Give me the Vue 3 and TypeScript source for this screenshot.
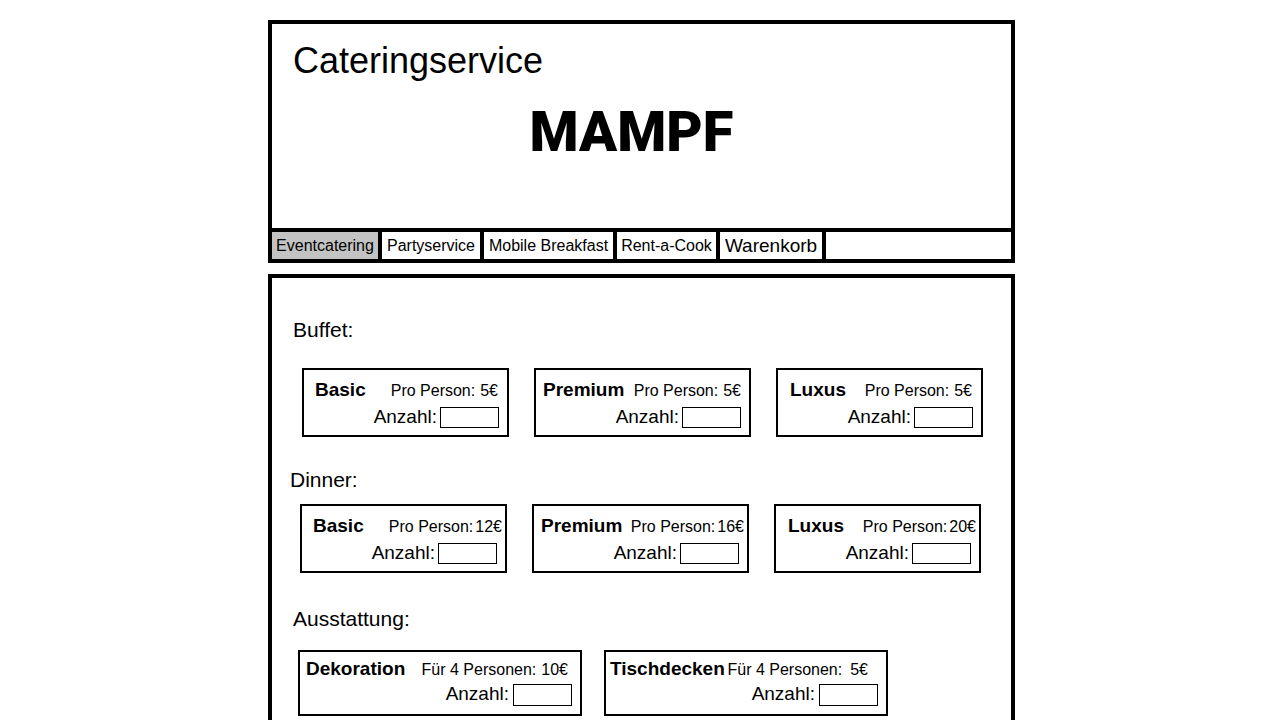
<script setup lang="ts">
import { ref } from 'vue'

interface Offer {
  id: string
  name: string
  unit: string
  price: string
}

interface Section {
  id: string
  title: string
  offers: Offer[]
}

interface NavItem {
  id: string
  label: string
}

const navItems: NavItem[] = [
  { id: 'event', label: 'Eventcatering' },
  { id: 'party', label: 'Partyservice' },
  { id: 'breakfast', label: 'Mobile Breakfast' },
  { id: 'cook', label: 'Rent-a-Cook' },
  { id: 'cart', label: 'Warenkorb' },
]

const sections: Section[] = [
  {
    id: 'buffet',
    title: 'Buffet:',
    offers: [
      { id: 'basic', name: 'Basic', unit: 'Pro Person:', price: '5€' },
      { id: 'premium', name: 'Premium', unit: 'Pro Person:', price: '5€' },
      { id: 'luxus', name: 'Luxus', unit: 'Pro Person:', price: '5€' },
    ],
  },
  {
    id: 'dinner',
    title: 'Dinner:',
    offers: [
      { id: 'basic', name: 'Basic', unit: 'Pro Person:', price: '12€' },
      { id: 'premium', name: 'Premium', unit: 'Pro Person:', price: '16€' },
      { id: 'luxus', name: 'Luxus', unit: 'Pro Person:', price: '20€' },
    ],
  },
  {
    id: 'equipment',
    title: 'Ausstattung:',
    offers: [
      { id: 'decoration', name: 'Dekoration', unit: 'Für 4 Personen:', price: '10€' },
      { id: 'tablecloths', name: 'Tischdecken', unit: 'Für 4 Personen:', price: '5€' },
    ],
  },
]

const active = ref('event')
const amounts = ref<Record<string, string>>({})
</script>

<template>
  <div class="page">
    <header class="banner">
      <div class="brand">
        <p class="service">Cateringservice</p>
        <h1 class="name">MAMPF</h1>
      </div>
      <nav class="nav">
        <a
          v-for="item in navItems"
          :key="item.id"
          :href="'#' + item.id"
          class="nav-link"
          :class="[item.id, { active: item.id === active }]"
          @click.prevent="active = item.id"
        >{{ item.label }}</a>
      </nav>
    </header>

    <main class="content">
      <section v-for="section in sections" :key="section.id" class="section" :class="section.id">
        <h2 class="section-title">{{ section.title }}</h2>
        <div class="cards">
          <article v-for="offer in section.offers" :key="offer.id" class="card" :class="offer.id">
            <div class="card-head">
              <h3 class="card-name">{{ offer.name }}</h3>
              <p class="price"><span>{{ offer.unit }}</span><span>{{ offer.price }}</span></p>
            </div>
            <div class="amount">
              <label :for="section.id + '-' + offer.id">Anzahl:</label>
              <input
                :id="section.id + '-' + offer.id"
                v-model="amounts[section.id + '-' + offer.id]"
                type="text"
                inputmode="numeric"
              />
            </div>
          </article>
        </div>
      </section>
    </main>
  </div>
</template>

<style>
body {
  background: #fff;
}
</style>

<style scoped>
.page {
  padding: 20px 16px 0 19px;
  font-family: "Liberation Sans", Arial, sans-serif;
  font-size: 16px;
  color: #000;
}

h1,
h2,
h3,
p {
  margin: 0;
}

.banner,
.content {
  box-sizing: border-box;
  max-width: 747px;
  margin: 0 auto;
  border: 4px solid #000;
}

.brand {
  padding: 17px 21px 64px;
}

.service {
  font-size: 36px;
  line-height: 40px;
}

.name {
  margin-top: 19px;
  padding-right: 20px;
  font-family: Roboto, "Liberation Sans", sans-serif;
  font-size: 56px;
  font-weight: 900;
  line-height: 64px;
  text-align: center;
}

.nav {
  display: grid;
  grid-template-columns: 110px 102px 133px 103px 106px;
  border-top: 4px solid #000;
}

.nav-link {
  border-right: 4px solid #000;
  line-height: 27px;
  text-align: center;
  white-space: nowrap;
  color: inherit;
  text-decoration: none;
}

.nav-link.active {
  background: #c3c3c3;
}

.nav-link.cart {
  font-size: 19px;
}

.content {
  margin-top: 11px;
  padding: 39px 18px 32px;
}

.section {
  padding-left: 3px;
}

.section.dinner {
  margin-top: 30px;
  padding-left: 0;
}

.section.equipment {
  margin-top: 33px;
}

.section-title {
  font-size: 21px;
  font-weight: normal;
  line-height: 26px;
}

.cards {
  display: grid;
  grid-template-columns: 207px 217px 207px;
  gap: 25px;
  margin-top: 25px;
  padding-left: 9px;
}

.dinner .cards {
  margin-top: 11px;
  padding-left: 10px;
}

.equipment .cards {
  grid-template-columns: 284px 284px;
  gap: 22px;
  margin-top: 18px;
  padding-left: 5px;
}

.card {
  border: 2px solid #000;
  padding: 9px 0 7px;
}

.equipment .card {
  padding: 6px 0 8px;
}

.card-head {
  display: flex;
  justify-content: space-between;
  align-items: baseline;
  padding: 0 9px 0 11px;
  line-height: 22px;
  white-space: nowrap;
}

.premium .card-head {
  padding: 0 8px 0 7px;
}

.dinner .card-head {
  padding-right: 3px;
}

.luxus .card-head {
  padding-left: 12px;
}

.decoration .card-head {
  padding: 0 12px 0 6px;
}

.tablecloths .card-head {
  padding: 0 18px 0 4px;
}

.card-name {
  font-size: 19px;
}

.price {
  display: flex;
  gap: 5px;
  line-height: 18px;
}

.dinner .price {
  gap: 2px;
}

.tablecloths .price {
  gap: 8px;
}

.amount {
  display: flex;
  justify-content: flex-end;
  align-items: flex-start;
  gap: 3px;
  margin-top: 6px;
  padding-right: 8px;
  font-size: 19px;
  line-height: 19px;
}

.equipment .amount {
  gap: 4px;
  margin-top: 4px;
}

.amount input {
  box-sizing: border-box;
  width: 59px;
  height: 21px;
  margin: 0;
  padding: 0 4px;
  border: 1px solid #000;
  border-radius: 0;
  background: #fff;
  font: inherit;
  font-size: 16px;
}

.equipment .amount input {
  height: 22px;
}
</style>
